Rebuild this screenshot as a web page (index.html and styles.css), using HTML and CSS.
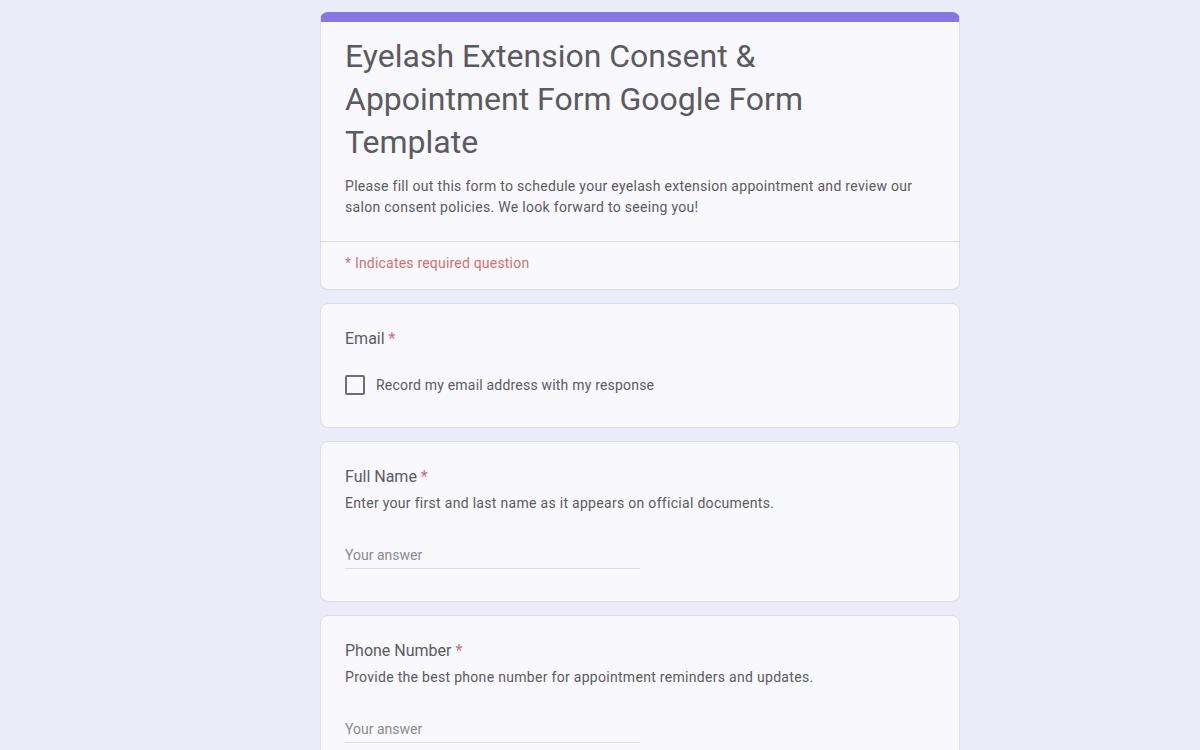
FILE: index.html
```html
<!DOCTYPE html>
<html lang="en">
<head>
  <meta charset="UTF-8">
  <title>Eyelash Extension Consent &amp; Appointment Form Google Form Template</title>
  <link rel="stylesheet" href="styles.css">
</head>
<body>
  <div class="form">
    <div class="card header-card">
      <div class="header-main">
        <h1>Eyelash Extension Consent &amp; Appointment Form Google Form Template</h1>
        <p class="intro">Please fill out this form to schedule your eyelash extension appointment and review our salon consent policies. We look forward to seeing you!</p>
      </div>
      <div class="header-note">* Indicates required question</div>
    </div>

    <div class="card question email-card">
      <div class="q-title">Email <span class="req">*</span></div>
      <label class="check-row">
        <span class="checkbox"></span>
        <span>Record my email address with my response</span>
      </label>
    </div>

    <div class="card question">
      <div class="q-title">Full Name <span class="req">*</span></div>
      <div class="q-help">Enter your first and last name as it appears on official documents.</div>
      <div class="answer">Your answer</div>
    </div>

    <div class="card question">
      <div class="q-title">Phone Number <span class="req">*</span></div>
      <div class="q-help">Provide the best phone number for appointment reminders and updates.</div>
      <div class="answer">Your answer</div>
    </div>
  </div>
</body>
</html>
```

FILE: styles.css
```css
body {
  margin: 0;
  padding: 12px 0 40px 80px;
  background-color: #ecebfa;
  font-family: Roboto, Arial, sans-serif;
  color: #5b5a61;
}

.form {
  width: 640px;
  margin: 0 auto;
  display: flex;
  flex-direction: column;
  gap: 13px;
}

.card {
  background-color: #f9f8fd;
  border: 1px solid #dcdbe6;
  border-radius: 8px;
}

.header-card {
  border-top: 10px solid #8677e0;
}

.header-main {
  padding: 13px 24px 23px;
  border-bottom: 1px solid #dcdbe6;
}

h1 {
  margin: 0;
  font-size: 32px;
  font-weight: 400;
  line-height: 43px;
  color: #5b5a61;
}

.intro {
  margin: 12px 0 0;
  font-size: 14px;
  line-height: 21px;
  letter-spacing: 0.3px;
}

.header-note {
  padding: 11px 24px 16px;
  font-size: 14px;
  line-height: 20px;
  letter-spacing: 0.2px;
  color: #d2716d;
}

.question {
  padding: 23px 24px 32px;
}

.q-title {
  font-size: 16px;
  line-height: 24px;
}

.req {
  color: #d2716d;
}

.q-help {
  margin-top: 4px;
  font-size: 14px;
  line-height: 20px;
  letter-spacing: 0.3px;
}

.check-row {
  display: flex;
  align-items: center;
  gap: 11px;
  margin-top: 24px;
  font-size: 14px;
  line-height: 20px;
  letter-spacing: 0.2px;
}

.checkbox {
  width: 16px;
  height: 16px;
  border: 2px solid #6e6d74;
  border-radius: 2px;
}

.answer {
  width: 295px;
  margin-top: 32px;
  padding-bottom: 3px;
  border-bottom: 1px solid #dcdbe6;
  font-size: 14px;
  line-height: 20px;
  color: #8b8a91;
}
```
